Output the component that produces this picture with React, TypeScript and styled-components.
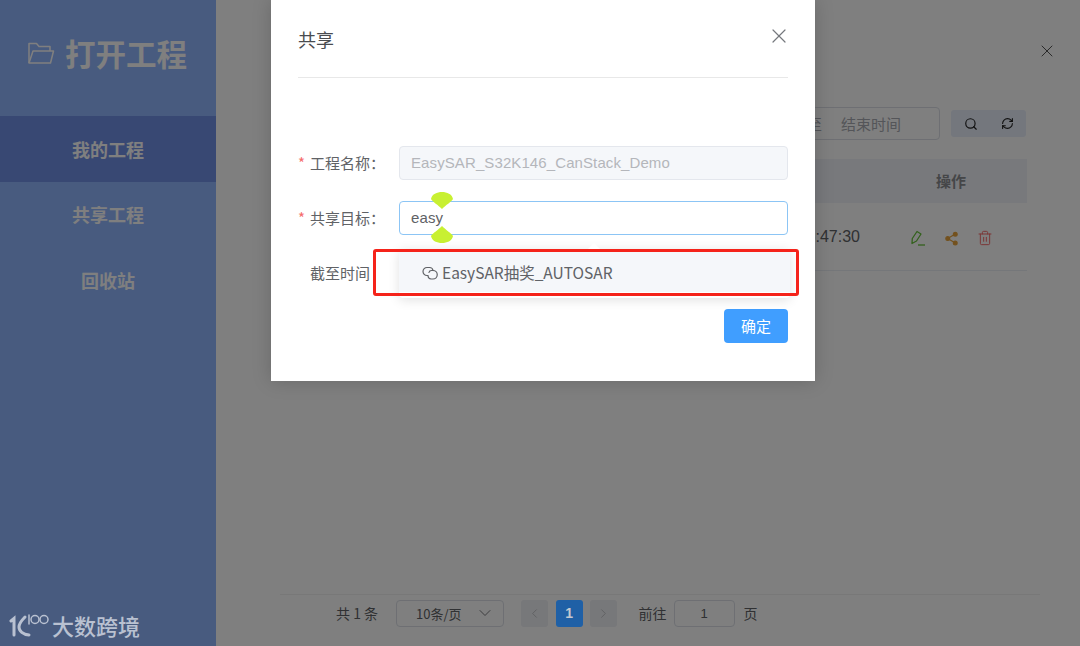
import React from 'react';
import styled, { createGlobalStyle } from 'styled-components';
import { ChevronDown, ChevronLeft, ChevronRight, RefreshCw, Search, Share2, Trash2, X } from 'lucide-react';

const SANS = `"Liberation Sans", "Noto Sans CJK SC", sans-serif`;
const CJK = `"Noto Sans CJK SC", "Liberation Sans", sans-serif`;

const GlobalStyle = createGlobalStyle`
  html, body { margin: 0; padding: 0; }
  body { font-family: ${SANS}; background: #fff; }
  * { box-sizing: border-box; }
`;

const Page = styled.div`
  position: relative;
  display: flex;
  width: 1080px;
  height: 646px;
  overflow: hidden;
`;

const Sidebar = styled.aside`
  flex: 0 0 216px;
  display: flex;
  flex-direction: column;
  background: #90b6ff;
`;

const Brand = styled.div`
  height: 116px;
  display: flex;
  align-items: center;
  gap: 10px;
  padding: 0 0 10px 27px;
  color: #fff;
  font: 700 30.5px/1 ${CJK};
`;

const NavItem = styled.div<{ $active?: boolean }>`
  height: 65.5px;
  display: flex;
  align-items: center;
  justify-content: center;
  color: #fff;
  font: 700 18px/1 ${CJK};
  background: ${p => (p.$active ? '#7190e6' : 'transparent')};
`;

const Main = styled.main`
  flex: 1;
  display: flex;
  flex-direction: column;
  padding: 0 53px 19px 64px;
  background: #fff;
`;

const CloseRow = styled.div`
  height: 107px;
  display: flex;
  justify-content: flex-end;
  padding: 41px 0 0;
  margin-right: -30px;
  color: #555;
`;

const Toolbar = styled.div`
  display: flex;
  align-items: center;
  justify-content: flex-end;
  gap: 11px;
  padding-right: 1px;
`;

const DateRange = styled.div`
  width: 220px;
  height: 33px;
  display: flex;
  align-items: center;
  justify-content: flex-end;
  gap: 19px;
  padding-right: 38px;
  border: 1px solid #dcdfe6;
  border-radius: 4px;
  color: #a8abb2;
  font: 15px/1 ${CJK};
`;

const ToolButtons = styled.div`
  width: 75px;
  height: 27px;
  display: flex;
  align-items: center;
  justify-content: space-around;
  padding: 0 1px;
  background: #e8eefb;
  border-radius: 3px;
  color: #222;
`;

const TableHead = styled.div`
  display: grid;
  grid-template-columns: 1fr 152px;
  height: 44px;
  margin-top: 19px;
  background: #f1f3f8;
  color: #8a8c90;
  font: 700 15px/44px ${CJK};
`;

const HeadCell = styled.div`
  text-align: center;
`;

const TableRow = styled.div`
  display: grid;
  grid-template-columns: 1fr 152px;
  height: 68px;
  padding-top: 3px;
  align-items: center;
  border-bottom: 1px solid #ebeef5;
`;

const TimeCell = styled.div`
  padding: 0 15px 2px 0;
  text-align: right;
  color: #606266;
  font: 16px/1 ${SANS};
`;

const Actions = styled.div`
  display: flex;
  justify-content: center;
  align-items: center;
  gap: 18px;
`;

const Pagination = styled.div`
  margin: auto -13px 0 0;
  height: 33px;
  padding: 4px 0 0 56px;
  border-top: 1px solid #f0f0f0;
  display: flex;
  align-items: center;
  color: #606266;
  font: 14px/1 ${CJK};
`;

const PagerLabel = styled.span<{ $before?: number; $after: number }>`
  margin: 0 ${p => p.$after}px 0 ${p => p.$before ?? 0}px;
  white-space: pre;
`;

const SizeSelect = styled.div`
  width: 108px;
  height: 27px;
  display: flex;
  align-items: center;
  justify-content: space-between;
  padding: 0 8px 0 19px;
  margin-right: 17px;
  border: 1px solid #dcdfe6;
  border-radius: 4px;
  font-size: 13px;
`;

const PageButton = styled.div<{ $active?: boolean }>`
  position: relative;
  z-index: ${p => (p.$active ? 1 : 'auto')};
  width: 27px;
  height: 27px;
  margin-right: 7.5px;
  display: flex;
  align-items: center;
  justify-content: center;
  border-radius: 3px;
  background: ${p => (p.$active ? '#1f60a6' : '#eef0f4')};
  color: ${p => (p.$active ? '#c4c8cf' : '#b4b6ba')};
  font: 700 14px/1 ${SANS};
`;

const JumpInput = styled.div`
  width: 61px;
  height: 27px;
  margin-right: 9px;
  display: flex;
  align-items: center;
  justify-content: center;
  border: 1px solid #dcdfe6;
  border-radius: 4px;
  font: 13px/1 ${SANS};
`;

const Overlay = styled.div`
  position: absolute;
  inset: 0;
  background: rgba(0, 0, 0, 0.5);
`;

const Dialog = styled.section`
  position: absolute;
  z-index: 2;
  top: 0;
  left: 271px;
  width: 544px;
  height: 381px;
  padding: 0 27px;
  background: #fff;
  box-shadow: 0 0 18px rgba(0, 0, 0, 0.18);
`;

const DialogHeader = styled.header`
  height: 78px;
  display: flex;
  justify-content: space-between;
  padding: 29px 0 0;
  border-bottom: 1px solid #e8e8e8;
  color: #4a4c50;
  font: 18px/21px ${CJK};
`;

const DialogClose = styled.div`
  height: 24px;
  margin: -5px -3px 0 0;
  color: #75787d;
`;

const Form = styled.form`
  display: flex;
  flex-direction: column;
  gap: 21px;
  margin: 68px 0 19px;
`;

const FormRow = styled.div`
  position: relative;
  display: flex;
  align-items: center;
  height: 34px;
`;

const FormLabel = styled.label<{ $plain?: boolean }>`
  flex: 0 0 101px;
  min-width: 0;
  padding: 0 ${p => (p.$plain ? 29 : 14)}px 2px 0;
  text-align: right;
  color: #606266;
  font: 15px/1 ${CJK};
  white-space: nowrap;
`;

const Required = styled.span`
  margin-right: 5px;
  color: #f56c6c;
`;

const Field = styled.div<{ $state?: 'disabled' | 'focus' }>`
  flex: 1;
  height: 34px;
  display: flex;
  align-items: center;
  padding: 0 11px 2px;
  border-radius: 4px;
  border: 1px solid ${p => (p.$state === 'focus' ? '#8cc5f5' : '#e4e7ed')};
  background: ${p => (p.$state === 'disabled' ? '#f5f7fa' : '#fff')};
  color: ${p => (p.$state === 'disabled' ? '#b4b6bb' : '#606266')};
  font: 15px/1 ${SANS};
  letter-spacing: 0.1px;
`;

const Handle = styled.svg<{ $flip?: boolean }>`
  position: absolute;
  left: 133px;
  top: ${p => (p.$flip ? '25px' : '-9px')};
  transform: ${p => (p.$flip ? 'scaleY(-1)' : 'none')};
`;

const Dropdown = styled.div`
  position: absolute;
  top: -7px;
  left: 101px;
  width: 391px;
  height: 49px;
  padding: 3px 0 0;
  background: #fff;
  border-radius: 4px;
  box-shadow: 0 2px 12px rgba(0, 0, 0, 0.12);

  &::before {
    content: '';
    position: absolute;
    top: -6px;
    left: 189px;
    border: 6px solid transparent;
    border-top-width: 0;
    border-bottom-color: #fff;
  }
`;

const Option = styled.div`
  height: 40px;
  display: flex;
  align-items: center;
  gap: 4px;
  padding: 2px 0 0 23px;
  background: #f5f7fa;
  color: #606266;
  font: 15.5px/1 ${CJK};
`;

const Highlight = styled.div`
  position: absolute;
  top: -7px;
  left: 75px;
  width: 426px;
  height: 47px;
  border: 3px solid #f5231a;
  border-radius: 3px;
`;

const DialogFooter = styled.footer`
  display: flex;
  justify-content: flex-end;
`;

const Confirm = styled.button`
  width: 64px;
  height: 34px;
  padding: 0 0 2px;
  border: 0;
  border-radius: 4px;
  background: #409eff;
  color: #fff;
  font: 15px/1 ${CJK};
`;

const Watermark = styled.div`
  position: absolute;
  z-index: 3;
  left: 9px;
  top: 611px;
  display: flex;
  align-items: center;
  gap: 2px;
  color: #b9c1d1;
  font: 500 22px/1 ${CJK};
`;

const FolderIcon = () => (
  <svg width="28" height="24" viewBox="0 0 28 24" fill="none" stroke="#fff" strokeWidth="1.5" strokeLinejoin="round">
    <path d="M2 22V2.500h7.500l2.500 3h11V10" />
    <path d="M2 22l4-12h20.500L23.500 22Z" />
  </svg>
);

const EditIcon = () => (
  <svg width="16" height="16" viewBox="0 0 16 16" fill="none" stroke="#67c23a" strokeWidth="1.3" strokeLinejoin="round">
    <path d="M2 13.500 2.300 8.500 7 1.500l4 2.500-4.500 7Z" />
    <path d="M8 15h7" />
  </svg>
);

const LinkIcon = () => (
  <svg width="16" height="14" viewBox="0 0 16 14" fill="none" stroke="#606266" strokeWidth="1.2" strokeLinecap="round">
    <path d="M6 9.500H5A4 4 0 0 1 5 1.500h2.500A3.500 3.500 0 0 1 11 4.500" />
    <path d="M7 6.500a2.500 2.500 0 0 1 2.500-2H11a4 4 0 0 1 0 8.500H9a3.500 3.500 0 0 1-3-3" />
  </svg>
);

const SelectionHandle = ({ flip }: { flip?: boolean }) => (
  <Handle $flip={flip} width="22" height="17" viewBox="0 0 22 17">
    <path d="M0 7C1 2 6 0 11 0s10 2 11 7c-2 3-7 6-11 10C7 13 2 10 0 7Z" fill="#c8f032" />
  </Handle>
);

const K100Logo = () => (
  <svg width="41" height="28" viewBox="0 0 41 28" fill="none" stroke="#b9c1d1" strokeLinecap="round">
    <path d="M2 10 5 7.500V24" strokeWidth="3" />
    <path d="M16 6C12 10 10 13 10 16c0 4 4 7.500 10 8" strokeWidth="3" />
    <path d="M20 4v9" strokeWidth="1.500" />
    <circle cx="26" cy="8.500" r="4" strokeWidth="1.500" />
    <circle cx="35" cy="8.500" r="4" strokeWidth="1.500" />
  </svg>
);

export default function App() {
  return (
    <Page>
      <GlobalStyle />
      <Sidebar>
        <Brand><FolderIcon />打开工程</Brand>
        <NavItem $active>我的工程</NavItem>
        <NavItem>共享工程</NavItem>
        <NavItem>回收站</NavItem>
      </Sidebar>

      <Main>
        <CloseRow><X size={20} strokeWidth={1.2} /></CloseRow>
        <Toolbar>
          <DateRange><span>至</span><span>结束时间</span></DateRange>
          <ToolButtons>
            <Search size={14} />
            <RefreshCw size={13} />
          </ToolButtons>
        </Toolbar>
        <TableHead>
          <HeadCell />
          <HeadCell>操作</HeadCell>
        </TableHead>
        <TableRow>
          <TimeCell>2023-10-11 16:47:30</TimeCell>
          <Actions>
            <EditIcon />
            <Share2 size={15} color="#e6a23c" fill="#e6a23c" />
            <Trash2 size={16} color="#f56c6c" strokeWidth={1.5} />
          </Actions>
        </TableRow>
        <Pagination>
          <PagerLabel $after={18}>共 1 条</PagerLabel>
          <SizeSelect>10条/页<ChevronDown size={20} strokeWidth={1} /></SizeSelect>
          <PageButton><ChevronLeft size={15} strokeWidth={1.2} /></PageButton>
          <PageButton $active>1</PageButton>
          <PageButton><ChevronRight size={15} strokeWidth={1.2} /></PageButton>
          <PagerLabel $before={14} $after={7}>前往</PagerLabel>
          <JumpInput>1</JumpInput>
          <span>页</span>
        </Pagination>
      </Main>

      <Overlay />

      <Dialog>
        <DialogHeader>
          共享
          <DialogClose><X size={24} strokeWidth={1.2} /></DialogClose>
        </DialogHeader>
        <Form>
          <FormRow>
            <FormLabel><Required>*</Required>工程名称：</FormLabel>
            <Field $state="disabled">EasySAR_S32K146_CanStack_Demo</Field>
          </FormRow>
          <FormRow>
            <FormLabel><Required>*</Required>共享目标：</FormLabel>
            <Field $state="focus">easy</Field>
            <SelectionHandle />
            <SelectionHandle flip />
          </FormRow>
          <FormRow>
            <FormLabel $plain>截至时间</FormLabel>
            <Field />
            <Dropdown>
              <Option><LinkIcon />EasySAR抽奖_AUTOSAR</Option>
            </Dropdown>
            <Highlight />
          </FormRow>
        </Form>
        <DialogFooter>
          <Confirm type="button">确定</Confirm>
        </DialogFooter>
      </Dialog>

      <Watermark><K100Logo />大数跨境</Watermark>
    </Page>
  );
}
